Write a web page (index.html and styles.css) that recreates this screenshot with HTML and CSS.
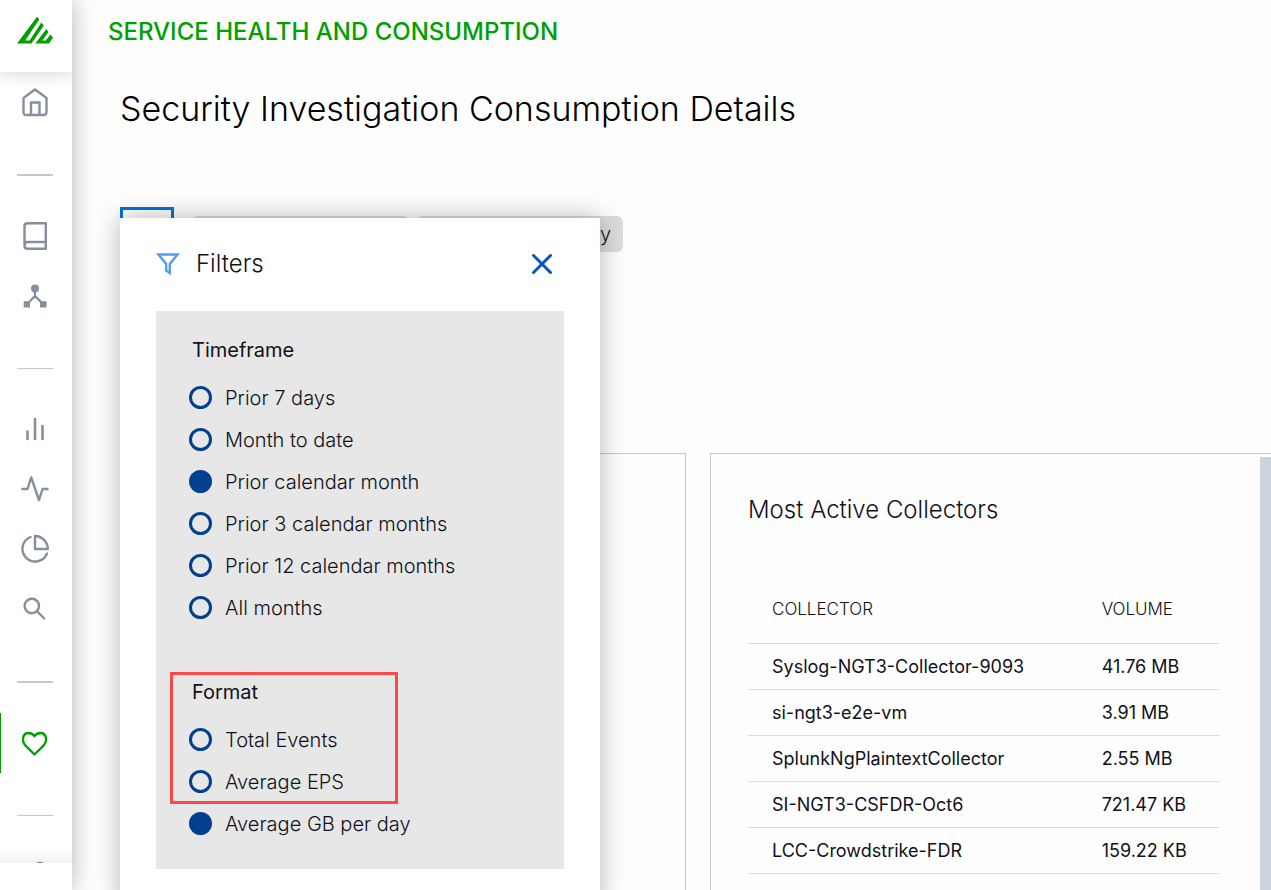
FILE: index.html
```html
<!DOCTYPE html>
<html lang="en">
<head>
<meta charset="utf-8">
<meta name="viewport" content="width=device-width, initial-scale=1">
<title>Service Health and Consumption</title>
<link rel="stylesheet" href="styles.css">
</head>
<body>
<div class="app">
  <aside class="sidebar">
    <a class="logo" href="#" aria-label="Home page">
      <svg width="36" height="28" viewBox="0 0 36 28"><path d="M0 27.500 20.200 0.500 22.300 3.500 8.200 24.500H12.600L24.300 6.500 26.800 9.500 14.500 27.500ZM18.300 27.500 29.300 13 31.500 16 25.300 24.500H28.700L33.600 18.500 36 21.800 32 27.500Z"/></svg>
    </a>
    <nav class="nav" aria-label="Main">
      <a class="nav-item" href="#" aria-label="Home">
        <svg width="28" height="30" viewBox="0 0 28 30"><path d="M2.500 10 14 1.500 25.500 10V24Q25.500 27 22.500 27H5.500Q2.500 27 2.500 24ZM10 27V14.500H18.500V27"/></svg>
      </a>
      <hr class="divider">
      <a class="nav-item" href="#" aria-label="Library">
        <svg width="28" height="30" viewBox="0 0 28 30"><path d="M24.800 2.300H6.500Q3.500 2.300 3.500 5.300V24.500Q3.500 27.800 6.500 27.800H24.800ZM3.500 24.500Q3.500 21 6.500 21H24.800"/></svg>
      </a>
      <a class="nav-item" href="#" aria-label="Collectors">
        <svg class="solid" width="28" height="30" viewBox="0 0 28 30"><circle cx="14" cy="7.500" r="4"/><path d="M12.900 9H15.100V14.500L21 20.300H25.500V26.500H19V21.500L14 16.800 9 21.500V26.500H2.700V20.300H7.200L12.900 14.500Z"/></svg>
      </a>
      <hr class="divider divider-thin">
      <a class="nav-item" href="#" aria-label="Dashboards">
        <svg class="bars" width="28" height="30" viewBox="0 0 28 30"><path d="M6.500 17.500V25M14 5V25M21.500 12V25"/></svg>
      </a>
      <a class="nav-item" href="#" aria-label="Activity">
        <svg width="28" height="30" viewBox="0 0 28 30"><path d="M1.500 15H6.500L10.200 3.500 18 26 21.500 15H26.500"/></svg>
      </a>
      <a class="nav-item" href="#" aria-label="Reports">
        <svg width="28" height="30" viewBox="0 0 28 30"><path d="M14 15V2A13 13 0 0 1 26.800 15ZM9.500 3A12.700 12.700 0 1 0 26 19.500"/></svg>
      </a>
      <a class="nav-item" href="#" aria-label="Search">
        <svg width="28" height="30" viewBox="0 0 28 30"><circle cx="10.800" cy="12" r="7.200"/><path d="M16 17.200 23.200 24.500"/></svg>
      </a>
      <hr class="divider divider-low">
      <a class="nav-item active" href="#" aria-label="Service health">
        <svg width="28" height="30" viewBox="0 0 28 30"><path d="M12.500 26.500 4 18.200C-1.500 12.500 1 5 6.500 5 9.300 5 11.300 6.200 12.500 8.200 13.700 6.200 15.700 5 18.500 5 24 5 26.500 12.500 21 18.200Z"/></svg>
      </a>
      <hr class="divider divider-thin">
      <a class="nav-item" href="#" aria-label="Settings">
        <svg width="28" height="30" viewBox="0 0 28 30"><circle cx="19" cy="7" r="5"/></svg>
      </a>
    </nav>
  </aside>
  <main class="main">
    <header class="app-header">SERVICE HEALTH AND CONSUMPTION</header>
    <h1 class="title">Security Investigation Consumption Details</h1>
    <div class="filter-bar">
      <button class="filter-button" type="button" aria-label="Filters"></button>
      <span class="chip chip-timeframe"></span>
      <span class="chip chip-format">y</span>
      <section class="panel" aria-labelledby="filters-title">
        <div class="panel-head">
          <svg width="24" height="22" viewBox="0 0 24 22"><path d="M2.500 1.500H21.500L13.800 11V20L10.200 17.500V11Z"/></svg>
          <h2 class="panel-title" id="filters-title">Filters</h2>
          <button class="close" type="button" aria-label="Close filters">
            <svg width="20" height="20" viewBox="0 0 20 20"><path d="M1.500 1.500 18.500 18.500M18.500 1.500 1.500 18.500"/></svg>
          </button>
        </div>
        <form class="options">
          <fieldset class="group">
            <legend class="legend">Timeframe</legend>
            <label class="option"><input type="radio" name="timeframe">Prior 7 days</label>
            <label class="option"><input type="radio" name="timeframe">Month to date</label>
            <label class="option"><input type="radio" name="timeframe" checked>Prior calendar month</label>
            <label class="option"><input type="radio" name="timeframe">Prior 3 calendar months</label>
            <label class="option"><input type="radio" name="timeframe">Prior 12 calendar months</label>
            <label class="option"><input type="radio" name="timeframe">All months</label>
          </fieldset>
          <fieldset class="group">
            <legend class="legend">Format</legend>
            <label class="option"><input type="radio" name="format">Total Events</label>
            <label class="option"><input type="radio" name="format">Average EPS</label>
            <label class="option"><input type="radio" name="format" checked>Average GB per day</label>
            <span class="highlight"></span>
          </fieldset>
        </form>
      </section>
    </div>
    <div class="cards">
      <section class="card"></section>
      <section class="card card-collectors">
        <div class="card-body">
          <h2 class="card-title">Most Active Collectors</h2>
          <table class="table">
            <thead><tr><th>COLLECTOR</th><th>VOLUME</th></tr></thead>
            <tbody>
              <tr><td>Syslog-NGT3-Collector-9093</td><td>41.76 MB</td></tr>
              <tr><td>si-ngt3-e2e-vm</td><td>3.91 MB</td></tr>
              <tr><td>SplunkNgPlaintextCollector</td><td>2.55 MB</td></tr>
              <tr><td>SI-NGT3-CSFDR-Oct6</td><td>721.47 KB</td></tr>
              <tr><td>LCC-Crowdstrike-FDR</td><td>159.22 KB</td></tr>
            </tbody>
          </table>
        </div>
        <div class="scroll-thumb"></div>
      </section>
    </div>
  </main>
</div>
</body>
</html>
```
FILE: styles.css
```css
* { box-sizing: border-box; }
body {
  margin: 0;
  background: #fefefe;
  color: #10111a;
  font-family: Inter, "Liberation Sans", sans-serif;
  font-weight: 300;
}
h1, h2 { margin: 0; font-weight: 300; }
svg { display: block; fill: none; }
.app { display: flex; height: 100vh; overflow: hidden; }

.sidebar {
  display: flex;
  flex-direction: column;
  flex: none;
  width: 72px;
  padding-bottom: 27px;
  background: #fff;
  box-shadow: 0 0 24px rgba(0, 0, 0, 0.3);
}
.logo {
  position: relative;
  display: flex;
  flex: none;
  align-items: center;
  justify-content: center;
  height: 72px;
  padding-bottom: 12px;
  padding-right: 2px;
  background: #fff;
  box-shadow: 0 0 18px rgba(0, 0, 0, 0.2);
  clip-path: inset(0 0 -20px 0);
}
.logo svg { fill: #00a000; }
.nav {
  flex: 1;
  min-height: 0;
  overflow: hidden;
  padding-top: 1px;
  box-shadow: inset 0 -20px 16px -16px rgba(0, 0, 0, 0.08);
}
.nav-item {
  display: flex;
  align-items: center;
  justify-content: center;
  height: 60px;
  padding-right: 2px;
}
.nav-item svg { stroke: #878e9c; stroke-width: 2.4; stroke-linejoin: round; stroke-linecap: round; }
.nav-item .solid { fill: #878e9c; stroke: none; }
.nav-item .bars { stroke-width: 2.6; }
.nav-item.active { border-left: 1px solid #00a000; }
.nav-item.active svg { stroke: #00a000; }
.divider { width: 36px; height: 2px; margin: 41px 0 30px 17px; border: 0; background: #c9c9c9; }
.divider-thin { height: 1px; margin-top: 42px; }
.divider-low { margin-top: 42px; }

.main { flex: 1; min-width: 0; display: flex; flex-direction: column; }
.app-header { padding: 16px 36px; color: #00a000; font-size: 24px; font-weight: 500; line-height: 32px; }
.title { padding: 23px 48px 0; color: #000; font-size: 34px; line-height: 44px; }
.filter-bar { position: relative; display: flex; gap: 8px; margin: 76px 48px 0; }
.filter-button { width: 54px; height: 54px; border: 3px solid #0671e0; background: #fff; }
.chip { height: 36px; margin-top: 9px; border-radius: 6px; background: #dcdcdc; font-size: 20px; line-height: 36px; text-align: right; }
.chip-timeframe { width: 217px; margin-left: 10px; }
.chip-format { width: 206px; padding-right: 12px; }
.panel {
  position: absolute;
  top: 11px;
  left: 0;
  width: 480px;
  padding: 27px 36px 36px;
  background: #fff;
  box-shadow: 0 0 24px rgba(0, 0, 0, 0.3);
}
.panel-head { display: flex; align-items: center; gap: 16px; height: 38px; margin-bottom: 28px; }
.panel-head > svg { stroke: #569bf2; stroke-width: 2.4; }
.panel-title { flex: 1; font-size: 24px; line-height: 32px; }
.close { padding: 12px; border: 0; background: none; }
.close svg { stroke: #0557bd; stroke-width: 3; stroke-linecap: round; }
.options { display: flex; flex-direction: column; gap: 48px; padding: 24px 33px; background: #e7e7e7; }
.group { position: relative; min-width: 0; margin: 0; padding: 0; border: 0; }
.legend { padding: 0 3px; margin-bottom: 12px; font-size: 20px; font-weight: 400; line-height: 30px; }
.option { display: flex; align-items: center; gap: 13px; height: 42px; font-size: 20px; }
.option input { appearance: none; width: 23px; height: 23px; margin: 0 0 2px; border: 3px solid #02408f; border-radius: 50%; }
.option input:checked { background: #02408f; }
.highlight { position: absolute; top: -47px; left: -19px; width: 228px; height: 132px; border: 3px solid #ff4747; pointer-events: none; }

.cards { flex: 1; display: grid; grid-template-columns: minmax(0, 566fr) minmax(0, 561fr); gap: 24px; min-height: 0; margin: 192px 0 0 48px; }
.card { border: 1px solid #c8c8c8; border-bottom: 0; }
.card-collectors { display: flex; border-right: 0; overflow: hidden; }
.card-body { flex: 1; padding: 40px 41px 0 37px; }
.card-title { font-size: 24px; line-height: 32px; }
.scroll-thumb { width: 11px; margin-top: 3px; background: #cbd3de; }
.table { width: 100%; margin-top: 48px; border-collapse: collapse; table-layout: fixed; }
.table th, .table td { height: 46px; padding: 0 24px; border-bottom: 1px solid #dcdcdc; font-size: 18px; text-align: left; white-space: nowrap; }
.table th { width: 30%; height: 69px; padding-top: 2px; font-size: 17px; font-weight: 300; }
.table th:first-child { width: 70%; }
.table td { font-weight: 400; }
```
